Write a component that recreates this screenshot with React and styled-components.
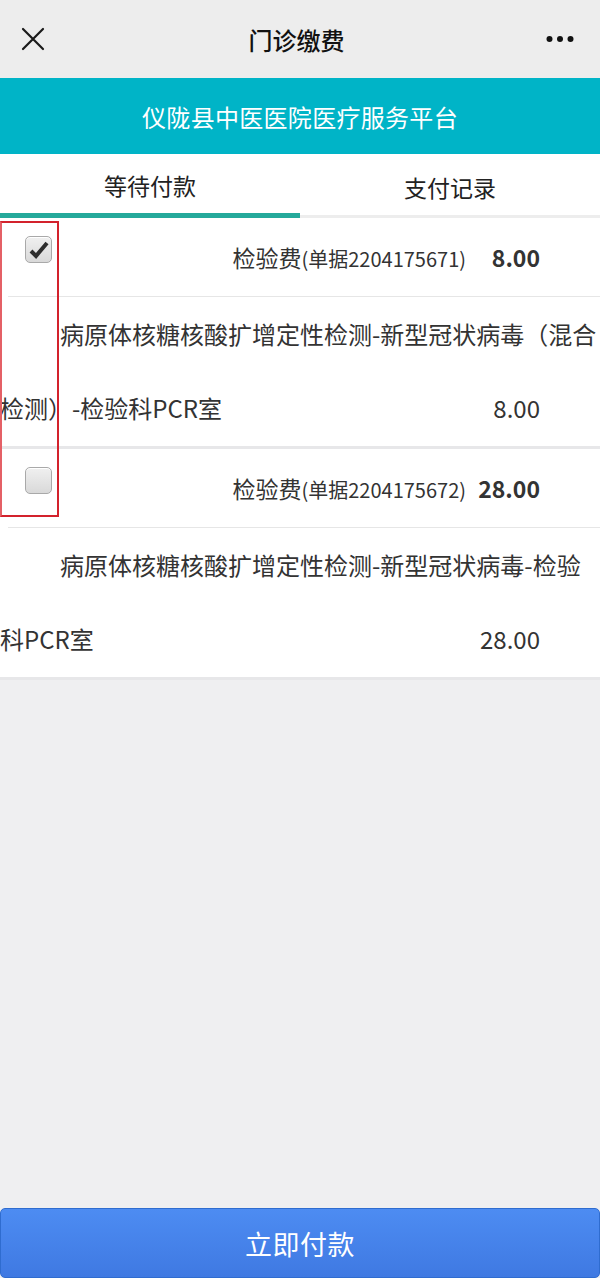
import React, { useState } from "react";
import styled, { createGlobalStyle } from "styled-components";

const GlobalStyle = createGlobalStyle`
    html, body {
        margin: 0;
        padding: 0;
        background: #efeff1;
    }
    * {
        box-sizing: border-box;
    }
    body {
        font-family: "Noto Sans CJK SC", "Noto Sans", "Liberation Sans", sans-serif;
        color: #333;
    }
`;

const Page = styled.div`
    position: relative;
    min-height: 1278px;
    display: flex;
    flex-direction: column;
    background: #efeff1;
`;

const NavBar = styled.div`
    height: 78px;
    background: #ededed;
    display: flex;
    align-items: center;
    justify-content: space-between;
    padding: 0 26px 0 19px;
`;

const NavTitle = styled.div`
    font-size: 24px;
    color: #111;
    font-weight: 500;
`;

const IconBtn = styled.div`
    width: 28px;
    height: 28px;
    display: flex;
    align-items: center;
    justify-content: center;
`;

const Banner = styled.div`
    height: 76px;
    background: #00b4c7;
    color: #fff;
    font-size: 24px;
    display: flex;
    align-items: center;
    justify-content: center;
    letter-spacing: 0.3px;
`;

const Tabs = styled.div`
    display: flex;
    background: #fff;
`;

const Tab = styled.div`
    flex: 1;
    height: 64px;
    display: flex;
    align-items: center;
    justify-content: center;
    font-size: 23px;
    color: #222;
    border-bottom: ${(p) => (p.$active ? "5px solid #25a99b" : "3px solid #ededed")};
    padding-top: ${(p) => (p.$active ? "3px" : "5px")};
`;

const List = styled.div`
    position: relative;
    background: #fff;
`;

const Item = styled.div`
    border-bottom: 3px solid #e7e7e9;
`;

const Head = styled.div`
    height: 78px;
    display: flex;
    align-items: center;
    padding: 0 60px 0 25px;
`;

const HeadWrap = styled.div`
    border-bottom: 1px solid #e6e6e6;
    margin-left: 8px;
`;

const Check = styled.span`
    align-self: flex-start;
    margin-top: 18px;
    margin-left: -8px;
    width: 27px;
    height: 27px;
    border-radius: 5px;
    border: 1px solid #a9a9a9;
    background: linear-gradient(#f0f0f0, #d9d9d9);
    box-shadow: inset 0 1px 0 #fff;
    display: flex;
    align-items: center;
    justify-content: center;
    cursor: pointer;
`;

const Spacer = styled.div`
    flex: 1;
`;

const FeeName = styled.span`
    font-size: 23px;
`;

const Bill = styled.span`
    font-size: 20px;
`;

const HeadAmount = styled.span`
    font-size: 23px;
    font-weight: 700;
    width: 74px;
    text-align: right;
`;

const Detail = styled.div`
    font-size: 24px;
    line-height: 74px;
    text-indent: 60px;
    padding-bottom: 1px;
`;

const DetailAmount = styled.span`
    float: right;
    text-indent: 0;
    margin-right: 60px;
`;

const Marker = styled.div`
    position: absolute;
    left: 0;
    top: 3px;
    width: 59px;
    height: 296px;
    border: 2px solid #d3222c;
    border-left-color: #e46066;
    pointer-events: none;
`;

const Fill = styled.div`
    flex: 1;
`;

const PayButton = styled.button`
    height: 70px;
    margin: 0;
    border: 1px solid #2f6ccf;
    border-radius: 5px;
    background: linear-gradient(#4d8cf2, #3f79e2);
    color: #fff;
    font-size: 27px;
    font-family: inherit;
    letter-spacing: 0.5px;
`;

const items = [
    {
        id: "2204175671",
        amount: "8.00",
        desc: "病原体核糖核酸扩增定性检测-新型冠状病毒（混合检测）-检验科PCR室",
        checked: true,
    },
    {
        id: "2204175672",
        amount: "28.00",
        desc: "病原体核糖核酸扩增定性检测-新型冠状病毒-检验科PCR室",
        checked: false,
    },
];

function App() {
    const [checked, setChecked] = useState(items.map((i) => i.checked));
    const toggle = (idx) => setChecked(checked.map((c, i) => (i === idx ? !c : c)));

    return (
        <Page>
            <GlobalStyle />
            <NavBar>
                <IconBtn>
                    <svg width="26" height="26" viewBox="0 0 26 26">
                        <path d="M3 3L23 23M23 3L3 23" stroke="#1a1a1a" strokeWidth="2.2" strokeLinecap="round" />
                    </svg>
                </IconBtn>
                <NavTitle>门诊缴费</NavTitle>
                <IconBtn>
                    <svg width="28" height="8" viewBox="0 0 28 8">
                        <circle cx="3.5" cy="4" r="3" fill="#111" />
                        <circle cx="14" cy="4" r="3" fill="#111" />
                        <circle cx="24.5" cy="4" r="3" fill="#111" />
                    </svg>
                </IconBtn>
            </NavBar>
            <Banner>仪陇县中医医院医疗服务平台</Banner>
            <Tabs>
                <Tab $active>等待付款</Tab>
                <Tab>支付记录</Tab>
            </Tabs>
            <List>
                {items.map((item, idx) => (
                    <Item key={item.id}>
                        <HeadWrap>
                            <Head>
                                <Check onClick={() => toggle(idx)}>
                                    {checked[idx] && (
                                        <svg width="20" height="18" viewBox="0 0 20 18">
                                            <path d="M2 10L7 15L18 2" stroke="#2e2e2e" strokeWidth="4" fill="none" strokeLinejoin="miter" />
                                        </svg>
                                    )}
                                </Check>
                                <Spacer />
                                <FeeName>
                                    检验费<Bill>(单据{item.id})</Bill>
                                </FeeName>
                                <HeadAmount>{item.amount}</HeadAmount>
                            </Head>
                        </HeadWrap>
                        <Detail>
                            {item.desc}
                            <DetailAmount>{item.amount}</DetailAmount>
                        </Detail>
                    </Item>
                ))}
                <Marker />
            </List>
            <Fill />
            <PayButton>立即付款</PayButton>
        </Page>
    );
}

export default App;
